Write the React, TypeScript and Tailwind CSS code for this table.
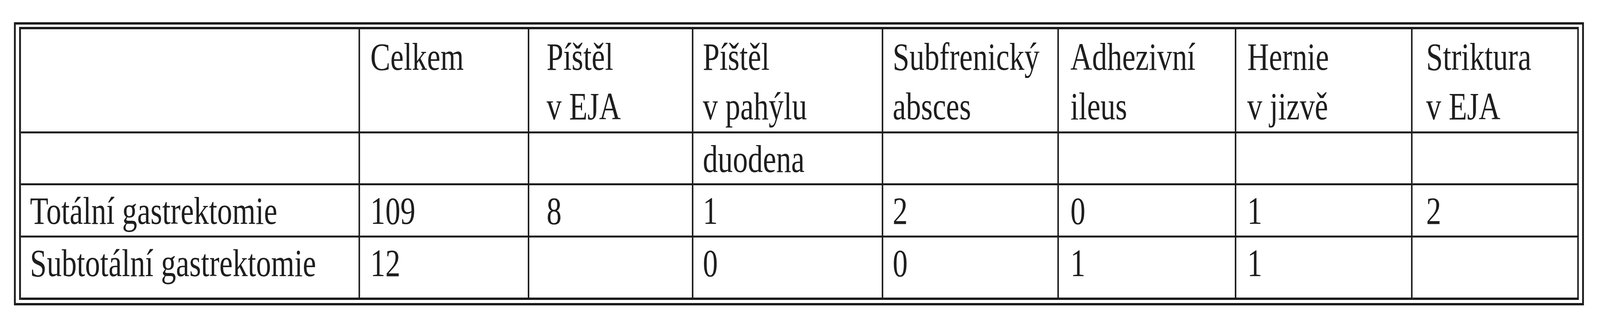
import { useState } from "react";

const header = [
  [],
  ["Celkem"],
  ["Píštěl", "v EJA"],
  ["Píštěl", "v pahýlu"],
  ["Subfrenický", "absces"],
  ["Adhezivní", "ileus"],
  ["Hernie", "v jizvě"],
  ["Striktura", "v EJA"],
];

const rows = [
  ["", "", "", "duodena", "", "", "", ""],
  ["Totální gastrektomie", "109", "8", "1", "2", "0", "1", "2"],
  ["Subtotální gastrektomie", "12", "", "0", "0", "1", "1", ""],
];

// left padding of each column, taken from the scan
const pad = ["pl-[30px]", "pl-[34px]", "pl-[57px]", "pl-[31px]", "pl-[31px]", "pl-[38px]", "pl-[36px]", "pl-[45px]"];

export default function App() {
  // the sheet is drawn 5275px wide; squeeze it into whatever width the window really has
  const [scale] = useState(() => Math.min(1, window.innerWidth / 5275));

  return (
    <div className="min-h-[800px] w-full overflow-hidden bg-white">
      <div
        className="w-[5275px] origin-top-left pl-[46px] pt-[57px] font-['Liberation_Serif','Times_New_Roman',serif] text-[99px] leading-[127px] text-[#1e1e1e]"
        style={{ transform: `scaleX(${scale})` }}
      >
        <div className="w-[5176px] border-[6px] border-[#1b1b1b] pt-[6px] pb-[8px] pl-[11px] pr-[11px]">
          <div className="grid grid-cols-[1118px_558px_541px_626px_579px_585px_581px_548px] grid-rows-[267px_133px_134px_160px] border-l-[6px] border-t-[6px] border-[#1b1b1b]">
            {header.map((lines, i) => (
              <div key={"h" + i} className={`border-r-[5px] border-b-[5px] border-[#1b1b1b] pt-[7px] ${pad[i]}`}>
                {lines.map((l) => (
                  <div key={l} className="whitespace-nowrap">{l}</div>
                ))}
              </div>
            ))}
            {rows.map((row, r) =>
              row.map((cell, i) => (
                <div
                  key={r + "-" + i}
                  className={`border-r-[5px] border-[#1b1b1b] pt-[2px] whitespace-nowrap ${pad[i]} ${r === rows.length - 1 ? "border-b-[6px]" : "border-b-[5px]"}`}
                >
                  {cell}
                </div>
              ))
            )}
          </div>
        </div>
      </div>
    </div>
  );
}
